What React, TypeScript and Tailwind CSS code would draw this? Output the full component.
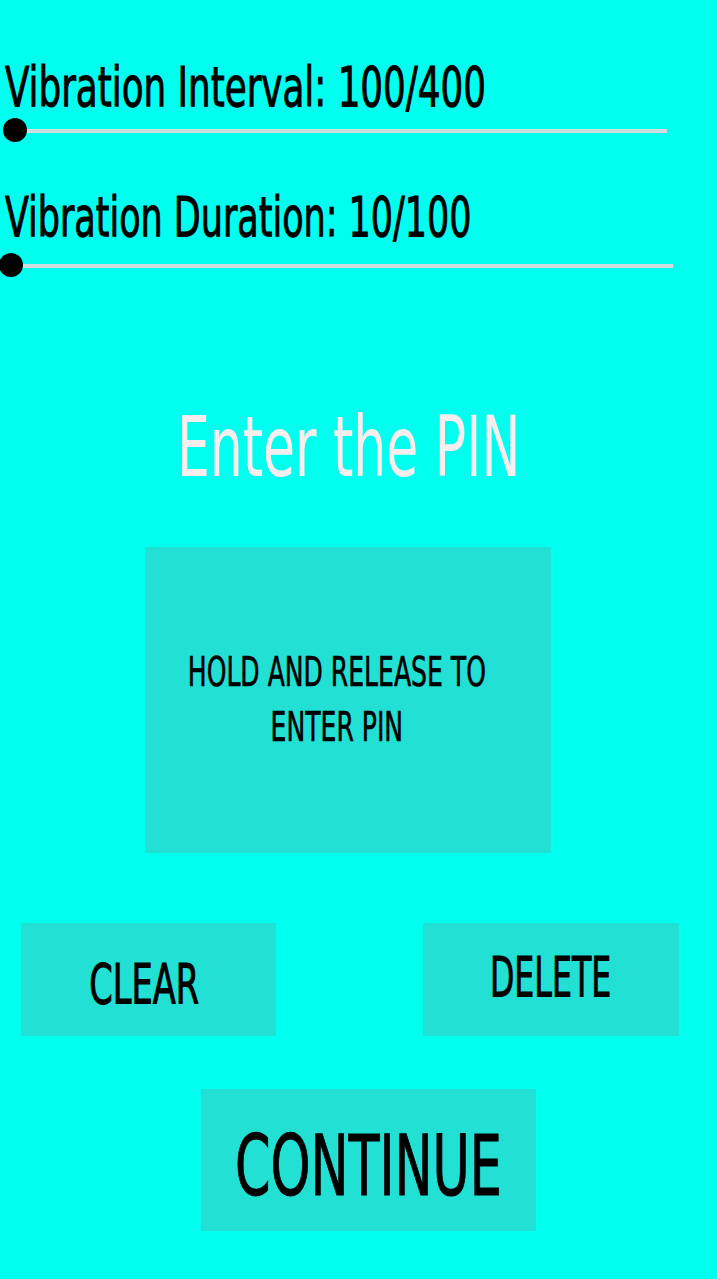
const font = 'font-["DejaVu_Sans_Condensed","DejaVu_Sans",sans-serif]';

function Slider({ thumbLeft, width }: { thumbLeft: string; width: string }) {
  return (
    <div className={`relative h-6 ${width}`}>
      <div className="absolute left-[12px] right-0 top-[11px] h-[4px] bg-[#cddcdc]" />
      <div className={`absolute top-0 ${thumbLeft} h-6 w-6 rounded-full bg-black`} />
    </div>
  );
}

export default function App() {
  return (
    <div className={`min-h-[1279px] w-full bg-[#00ffee] ${font} text-black`}>
      <div className="pt-[59px] pl-[5px]">
        <div className="text-[56px] leading-none [-webkit-text-stroke:1px_black]">
          <span className="inline-block origin-left scale-x-[0.709] whitespace-nowrap">Vibration Interval: 100/400</span>
        </div>
      </div>
      <div className="mt-[3px]">
        <Slider thumbLeft="left-[3px]" width="w-[667px]" />
      </div>

      <div className="mt-[47px] pl-[5px]">
        <div className="text-[56px] leading-none [-webkit-text-stroke:1px_black]">
          <span className="inline-block origin-left scale-x-[0.694] whitespace-nowrap">Vibration Duration: 10/100</span>
        </div>
      </div>
      <div className="mt-[8px]">
        <Slider thumbLeft="left-[-1px]" width="w-[673px]" />
      </div>

      <div className="mt-[128px] flex w-[697px] justify-center">
        <h1 className="text-[84px] font-normal leading-none text-[#f8eeee]">
          <span className="inline-block origin-center scale-x-[0.688] whitespace-nowrap">Enter the PIN</span>
        </h1>
      </div>

      <button className="mt-[58px] ml-[145px] flex h-[306px] w-[406px] items-center justify-center bg-[#22e0d4] pr-[22px]">
        <span className="inline-block origin-center scale-x-[0.697] text-center text-[40px] leading-[55px] whitespace-nowrap [-webkit-text-stroke:0.6px_black]">
          HOLD AND RELEASE TO
          <br />
          ENTER PIN
        </span>
      </button>

      <div className="mt-[70px] flex items-start">
        <button className="ml-[21px] flex h-[113px] w-[255px] justify-center bg-[#22e0d4] pt-[33px] pr-[8px]">
          <span className="inline-block origin-center scale-x-[0.668] text-[56px] leading-none [-webkit-text-stroke:1px_black]">CLEAR</span>
        </button>
        <button className="ml-[147px] flex h-[113px] w-[256px] justify-center bg-[#22e0d4] pt-[26px]">
          <span className="inline-block origin-center scale-x-[0.628] text-[56px] leading-none [-webkit-text-stroke:1px_black]">DELETE</span>
        </button>
      </div>

      <button className="mt-[53px] ml-[201px] flex h-[142px] w-[335px] justify-center bg-[#22e0d4] pt-[35px]">
        <span className="inline-block origin-center scale-x-[0.673] text-[84px] leading-none [-webkit-text-stroke:1px_black]">CONTINUE</span>
      </button>
    </div>
  );
}
